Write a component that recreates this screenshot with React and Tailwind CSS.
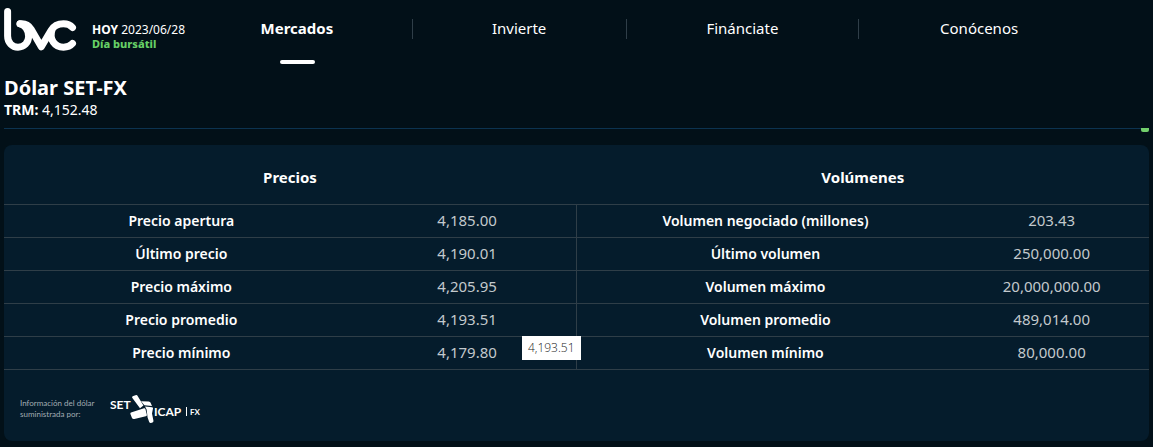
import React from 'react';

const navItems = [
    { label: 'Mercados', active: true },
    { label: 'Invierte' },
    { label: 'Finánciate' },
    { label: 'Conócenos' },
];

const prices = [
    { label: 'Precio apertura', value: '4,185.00' },
    { label: 'Último precio', value: '4,190.01' },
    { label: 'Precio máximo', value: '4,205.95' },
    { label: 'Precio promedio', value: '4,193.51', tooltip: '4,193.51' },
    { label: 'Precio mínimo', value: '4,179.80' },
];

const volumes = [
    { label: 'Volumen negociado (millones)', value: '203.43' },
    { label: 'Último volumen', value: '250,000.00' },
    { label: 'Volumen máximo', value: '20,000,000.00' },
    { label: 'Volumen promedio', value: '489,014.00' },
    { label: 'Volumen mínimo', value: '80,000.00' },
];

const BvcLogo = () => (
    <svg className="h-11 w-[74px] shrink-0" viewBox="0 0 74 44" fill="none" stroke="#fff" strokeWidth="7" strokeLinecap="round" strokeLinejoin="round" aria-label="bvc">
        <path d="M3.6 3.6V28C3.6 34.5 8.2 39.2 14 39.2C20 39.2 24.6 34.6 24.6 28.5C24.6 21.5 20.5 16.8 16 15.8" />
        <path d="M16 15.8C20.5 15.2 24.5 17 27 21L37.3 38.8L47 22.5C50 17.5 55 15.8 59.5 15.8C63.5 15.8 66.5 17.2 68.5 19.5" />
        <path d="M48 22C45 31 50.5 39.2 59.5 39.2C63.5 39.2 66.5 37.8 68.5 35.5" />
    </svg>
);

const SetIcapLogo = () => (
    <svg className="h-[30px] w-[92px] shrink-0" viewBox="0 0 92 30" fill="#fff" aria-label="SET ICAP FX">
        <g fontFamily="Lato, sans-serif" fontWeight="700">
            <text x="0" y="15" fontSize="12">SET</text>
            <text x="44" y="22" fontSize="12">ICAP</text>
            <text x="80" y="21" fontSize="8">FX</text>
        </g>
        <rect x="76" y="13" width="1" height="9" />
        <path d="M22.2 3.8C21.9 2.9 22.4 2.4 23.2 2L25.6 1.2C26.6 .9 27.3 1.3 27.8 2.2L33.4 11.6L30 14.2Z" />
        <path d="M31 7.2L38.6 7.6C39.6 7.7 40.4 8.3 40.8 9.2L42 12L34.4 11.2Z" />
        <path d="M21 18.4L34 14.2C34.8 14 35.2 14.3 35.4 15L36.8 20.4C37 21.4 36.6 22 35.8 22.2L24.4 25C23.2 25.3 22.4 24.9 22 24L20.4 20C20.2 19.2 20.4 18.7 21 18.4Z" />
        <path d="M35 12.6L42 13.2C42.8 13.3 43.2 13.8 43 14.6L42 19.4L43.4 26.4C43.6 27.4 43.2 28 42.4 28.4L41 29C40.2 29.2 39.6 28.8 39.2 28L37.6 23.4L36.6 15.4Z" />
    </svg>
);

const QuoteTable = ({ title, rows, columns, className }) => (
    <table className={`w-full table-fixed border-collapse text-center text-sm ${className}`}>
        <colgroup>
            <col className={columns} />
            <col />
        </colgroup>
        <thead>
            <tr className="h-[59px]">
                <th colSpan={2} className="pt-1.5 text-[15px] font-bold">{title}</th>
            </tr>
        </thead>
        <tbody>
            {rows.map((row) => (
                <tr key={row.label} className="h-[33px] border-y border-[#2f3e48]">
                    <th scope="row" className="font-semibold">{row.label}</th>
                    <td className="relative text-[15px] text-[#c3c9cd]">
                        {row.value}
                        {row.tooltip && (
                            <span role="tooltip" className="absolute top-full right-[-5px] z-10 bg-white px-1.5 py-1 font-['Open_Sans',sans-serif] text-xs leading-4 font-light text-[#222]">
                                {row.tooltip}
                            </span>
                        )}
                    </td>
                </tr>
            ))}
        </tbody>
    </table>
);

const App = () => {
    return (
        <div className="min-h-screen bg-[#021018] px-1 pb-[6px] font-['Noto_Sans',sans-serif] text-white">
            <header className="flex h-16">
                <div className="flex w-[178px] shrink-0 gap-[14px] pt-2 whitespace-nowrap">
                    <BvcLogo />
                    <div className="pt-[14px]">
                        <p className="text-xs leading-4"><strong>HOY</strong> 2023/06/28</p>
                        <p className="text-[11px] leading-3 font-extrabold text-[#66cf66]">Día bursátil</p>
                    </div>
                </div>
                <nav className="mr-[50px] grid flex-1 grid-cols-[231fr_214fr_233fr_240fr]">
                    {navItems.map((item, i) => (
                        <div key={item.label} className="flex flex-col justify-between pt-[19px]">
                            <a
                                href="#"
                                className={`block h-5 text-center text-[15px] leading-[18px] ${i < navItems.length - 1 ? 'border-r border-[#2f3e48]' : ''} ${item.active ? 'font-bold' : ''}`}
                            >
                                {item.label}
                            </a>
                            {item.active && <span className="mx-auto h-1 w-[35px] rounded-full bg-white" />}
                        </div>
                    ))}
                </nav>
            </header>

            <section className="pt-3">
                <h1 className="text-xl leading-6 font-bold">Dólar SET-FX</h1>
                <p className="text-sm leading-5"><strong>TRM:</strong> 4,152.48</p>
                <div className="mt-2 flex h-1 items-start">
                    <div className="h-px flex-1 bg-[#0c3350]" />
                    <div className="h-1 w-2 rounded-b-xs bg-[#72cf6c]" />
                </div>
            </section>

            <main className="mt-[13px] rounded-lg bg-[#051c2c]">
                <div className="grid grid-cols-2">
                    <QuoteTable title="Precios" rows={prices} columns="w-[62%]" className="[&_tbody]:border-r [&_tbody]:border-[#2f3e48]" />
                    <QuoteTable title="Volúmenes" rows={volumes} columns="w-[66%]" className="" />
                </div>
                <footer className="flex items-center gap-[14px] px-4 pt-6 pb-[17px]">
                    <p className="w-[76px] font-['Lato',sans-serif] text-[8px] leading-[11px] whitespace-nowrap text-[#a3adb3]">
                        Información del dólar<br />suministrada por:
                    </p>
                    <SetIcapLogo />
                </footer>
            </main>
        </div>
    );
};

export default App;
